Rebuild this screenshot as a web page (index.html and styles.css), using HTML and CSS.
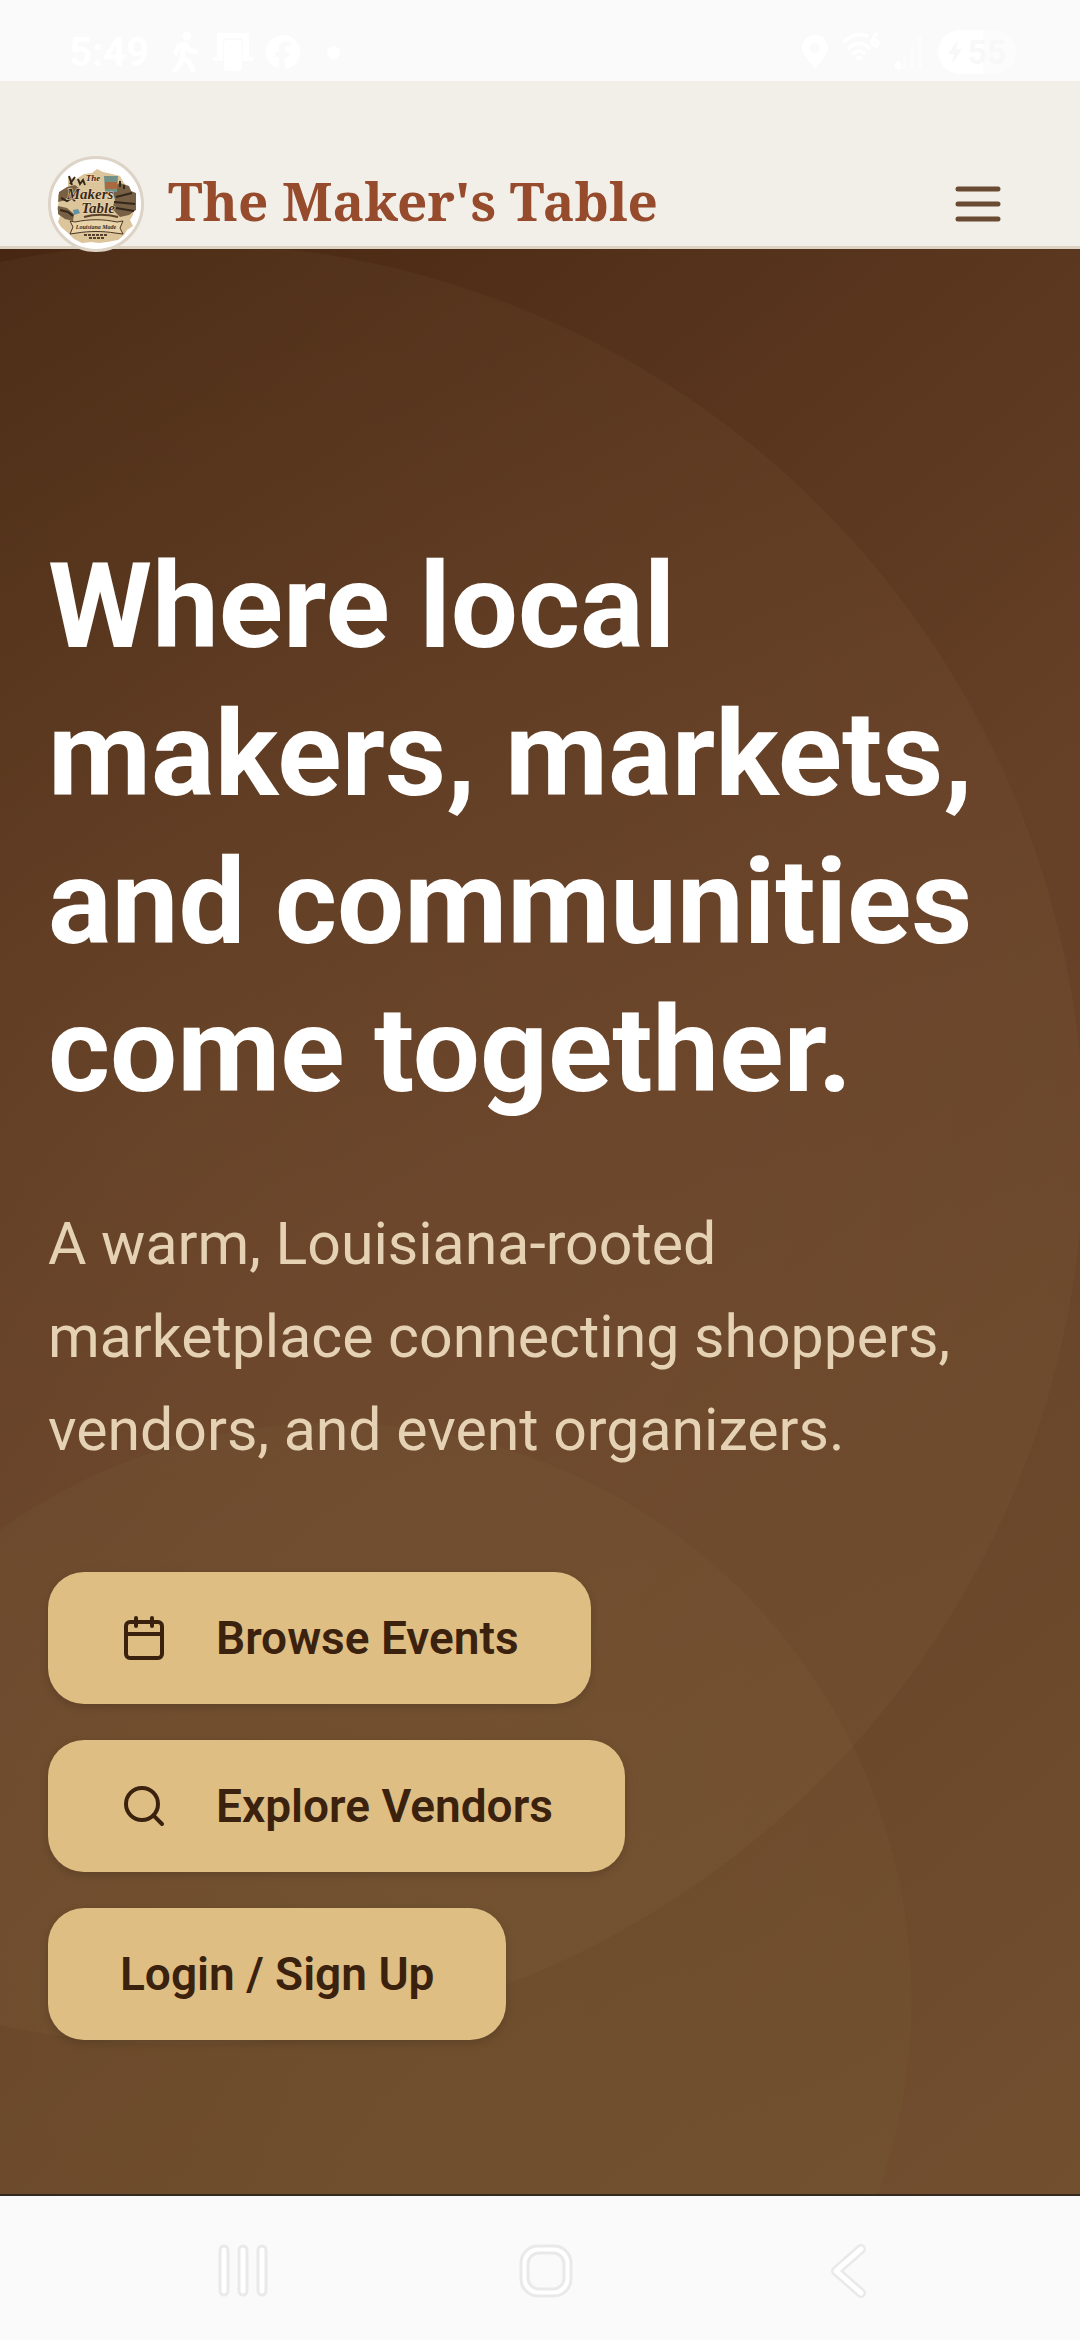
FILE: index.html
```
<!DOCTYPE html>
<html lang="en">
<head>
    <meta charset="UTF-8">
    <meta name="viewport" content="width=device-width, initial-scale=1.0">
    <title>The Maker's Table</title>
    <link rel="stylesheet" href="styles.css">
</head>
<body>

    <!-- Status bar -->
    <div class="status-bar">
        <div class="status-group">
            <span class="clock">5:49</span>
            <svg width="28" height="42" viewBox="0 0 28 42" fill="none" stroke="#fff" stroke-width="5" stroke-linecap="round" stroke-linejoin="round">
                <circle cx="15" cy="5" r="4.500" fill="#fff" stroke="none"/>
                <path d="M4 22l2-6 7-3 4 6 7 2M12 14l-2 12 8 6 3 7M10 27l-2 6-5 6"/>
            </svg>
            <svg width="40" height="38" viewBox="0 0 40 38" fill="#fff">
                <path d="M4 0h32v24h4v4H30V8a3 3 0 0 0-3-3H13a3 3 0 0 0-3 3v20H0v-4h4z"/>
                <rect x="11" y="7" width="18" height="31" rx="3"/>
            </svg>
            <svg width="34" height="34" viewBox="0 0 24 24" fill="#fff">
                <path d="M24 12a12 12 0 1 0-15 11.600v-8H6.500V12H9v-1.600c0-4 2-6 5.700-6 .8 0 2 .1 2.600.3v3.200h-1.500c-1.800 0-2.500.7-2.500 2.400V12h3.700l-.6 3.600h-3.100V24A12 12 0 0 0 24 12z"/>
            </svg>
            <span class="dot"></span>
        </div>
        <div class="status-group status-right">
            <svg width="26" height="34" viewBox="0 0 26 34" fill="#fff">
                <path fill-rule="evenodd" d="M13 0a13 13 0 0 1 13 13c0 9-8 12-13 21C8 25 0 22 0 13A13 13 0 0 1 13 0zm0 8a5 5 0 1 0 0 10 5 5 0 0 0 0-10z"/>
            </svg>
            <svg width="38" height="40" viewBox="0 0 38 40" fill="none" stroke="#fff" stroke-width="3.500" stroke-linecap="round">
                <path d="M2 10C9 2 18 1 25 4M7 16c6-6 14-6 20 0M12 21c3-3 7-3 10 0"/>
                <circle cx="17" cy="26" r="1"/>
                <path d="M34 2l-4 7"/>
                <circle cx="33" cy="11" r="3"/>
            </svg>
            <svg width="30" height="36" viewBox="0 0 30 36" fill="#fff">
                <path d="M1 30a3 3 0 0 1 6 0v5H1z"/>
                <path d="M9 22h4v13H9zM16 12h4v23h-4zM23 1h5v34h-5z" opacity=".4"/>
            </svg>
            <span class="battery">
                <svg width="16" height="24" viewBox="0 0 16 24" fill="#f8f8f8"><path d="M11 0L1 14h6l-2 10L15 9H9z"/></svg>55
            </span>
        </div>
    </div>

    <!-- Header -->
    <header class="header">
        <a class="brand" href="#">
            <svg class="logo" viewBox="0 0 96 96" role="img" aria-label="The Maker's Table">
                <circle cx="48" cy="48" r="46.500" fill="#fff" stroke="#ddd3c6" stroke-width="3"/>
                <path d="M20 21l8 2 8-5 8-1 5-4 6 3 9 2 8 2 4 7 7 7-1 6 5 9-2 10-3 5 3 6-6 4-3 5-6 5-11 2-8 1-8-1-9 1-8-4-6-6-7-6-3-5 2-6-3-7 2-8-1-6 5-5 5-2z" fill="#dcc49b"/>
                <path d="M11 36l8-5 8-2 5 4-5 7-9 4-8 2zM63 30l9-3 9 3 2 5 5 2v17l-7 5-9 2-8-8 3-9zM10 50l9 2 7 6-1 7-8-2-7-5z" fill="#786044"/>
                <path d="M21 20l3 9M27 21l-5 7M30 23l2 5 3-4 2 5M13 42l6 3 5-3 3 3M68 41l16-4M66 46l21 2M68 52l18 3M72 31v-6M76 29v4M12 54l8 2 5 4" fill="none" stroke="#34281b" stroke-width="2"/>
                <path d="M56 20h14l-1 16H57z" fill="#739187"/>
                <path d="M57 26h12v7H57z" fill="#aa6a40"/>
                <path d="M25 54l5-1 2 4-6 2z" fill="#5f95a6"/>
                <text x="45" y="25" class="logo-small">The</text>
                <text x="42" y="43" class="logo-script">Makers</text>
                <text x="50" y="57" class="logo-script">Table</text>
                <path d="M36 61c11-3 22-3 34 0" fill="none" stroke="#5a412a" stroke-width="2"/>
                <path d="M22 65l5 1c14-3 28-3 42 0l6-1-3 7 3 6-8-1c-12-2-26-2-38 0l-7 1 3-7z" fill="#e8d3aa" stroke="#4b3825"/>
                <text x="48" y="73" class="logo-ribbon">Louisiana Made</text>
                <path d="M36 79h24M41 82h15" stroke="#57422d" stroke-width="2" stroke-dasharray="3 1"/>
            </svg>
            <span class="brand-name">The Maker's Table</span>
        </a>
        <button class="menu-button" aria-label="Open menu">
            <svg width="60" height="60" viewBox="0 0 24 24" fill="none" stroke="currentColor" stroke-width="2" stroke-linecap="round">
                <path d="M4 6h16M4 12h16M4 18h16"/>
            </svg>
        </button>
    </header>

    <!-- Hero -->
    <main class="hero">
        <h1>Where local makers, markets, and communities come together.</h1>
        <p class="lead">A warm, Louisiana-rooted marketplace connecting shoppers, vendors, and event organizers.</p>
        <div class="actions">
            <a class="btn" href="#">
                <svg width="48" height="48" viewBox="0 0 24 24" fill="none" stroke="currentColor" stroke-width="2" stroke-linecap="round" stroke-linejoin="round">
                    <rect x="3" y="4" width="18" height="18" rx="2"/>
                    <path d="M8 2v4M16 2v4M3 10h18"/>
                </svg>
                Browse Events
            </a>
            <a class="btn" href="#">
                <svg width="48" height="48" viewBox="0 0 24 24" fill="none" stroke="currentColor" stroke-width="2" stroke-linecap="round">
                    <circle cx="11" cy="11" r="8"/>
                    <path d="M21 21l-4.300-4.300"/>
                </svg>
                Explore Vendors
            </a>
            <a class="btn" href="#">Login / Sign Up</a>
        </div>
    </main>

    <!-- Navigation bar -->
    <nav class="nav-bar">
        <button aria-label="Recent apps">
            <svg width="54" height="54" viewBox="0 0 54 54" fill="#fff" stroke="#e9e9e9" stroke-width="3">
                <rect x="4" y="2" width="8" height="49" rx="4"/>
                <rect x="23" y="2" width="8" height="49" rx="4"/>
                <rect x="42" y="2" width="8" height="49" rx="4"/>
            </svg>
        </button>
        <button aria-label="Home">
            <svg width="54" height="54" viewBox="0 0 54 54" fill="#fff" stroke="#e9e9e9" stroke-width="3">
                <rect x="2" y="2" width="50" height="50" rx="17"/>
                <rect x="9" y="9" width="36" height="36" rx="11" fill="#fafafa"/>
            </svg>
        </button>
        <button aria-label="Back">
            <svg width="54" height="54" viewBox="0 0 54 54" fill="none" stroke-linecap="round" stroke-linejoin="round">
                <path d="M40 5L15 27l25 22" stroke="#e9e9e9" stroke-width="10"/>
                <path d="M40 5L15 27l25 22" stroke="#fff" stroke-width="5"/>
            </svg>
        </button>
    </nav>

</body>
</html>
```
FILE: styles.css
```
/* Basic Reset */
* {
    margin: 0;
    padding: 0;
    box-sizing: border-box;
}

body {
    font-family: Roboto, sans-serif;
    min-height: 100vh;
    display: flex;
    flex-direction: column;
    background: #fafafa;
}

svg {
    display: block;
    flex-shrink: 0;
}

a {
    color: inherit;
    text-decoration: none;
}

button {
    border: none;
    background: none;
    cursor: pointer;
}

/* Status bar */
.status-bar {
    height: 81px;
    padding: 25px 64px 0 69px;
    display: flex;
    justify-content: space-between;
    color: #fff;
}

.status-group {
    height: 54px;
    display: flex;
    align-items: center;
    gap: 13px;
}

.status-right {
    gap: 14px;
}

.clock {
    font-size: 40px;
    font-weight: 700;
    margin-right: 10px;
}

.dot {
    width: 13px;
    height: 13px;
    margin-left: 14px;
    border-radius: 50%;
    background: #fff;
}

.battery {
    width: 78px;
    height: 44px;
    display: flex;
    align-items: center;
    justify-content: center;
    gap: 4px;
    border-radius: 22px;
    background: linear-gradient(to right, #fff 58%, #fcfcfc 58%);
    color: #f8f8f8;
    font-size: 34px;
    font-weight: 700;
}

/* Header */
.header {
    height: 168px;
    padding: 75px 48px 0;
    display: flex;
    align-items: flex-start;
    justify-content: space-between;
    background: #f2efe8;
    border-bottom: 3px solid #ddd1c2;
}

.brand {
    display: flex;
    align-items: center;
    gap: 24px;
    position: relative;
    z-index: 1;
}

.logo {
    width: 96px;
    height: 96px;
}

.logo text {
    fill: #3b2918;
    stroke: #f0dfbd;
    stroke-width: 1px;
    paint-order: stroke;
    text-anchor: middle;
    font-family: "Liberation Serif", serif;
    font-style: italic;
    font-weight: 700;
}

.logo .logo-small {
    font-size: 9px;
}

.logo .logo-script {
    font-size: 15px;
}

.logo .logo-ribbon {
    font-size: 6px;
    stroke: none;
}

.brand-name {
    padding-bottom: 6px;
    font-family: "Noto Serif", "Droid Serif", "Liberation Serif", serif;
    font-size: 53px;
    line-height: 72px;
    font-weight: 700;
    color: #964b2d;
}

.menu-button {
    padding: 18px 24px;
    color: #694a33;
}

/* Hero */
.hero {
    flex: 1;
    padding: 0 48px 154px;
    display: flex;
    flex-direction: column;
    justify-content: flex-end;
    background:
        radial-gradient(circle at 17% 46%, rgba(190, 155, 105, 0.11) 0, rgba(190, 160, 110, 0.05) 900px, transparent 901px),
        radial-gradient(circle at 31% 90%, rgba(130, 130, 60, 0.12) 0, rgba(135, 130, 75, 0.07) 576px, transparent 577px),
        linear-gradient(140deg, #472712 0%, #653f26 48%, #714f2f 100%);
    border-bottom: 2px solid #33291f;
}

h1 {
    font-size: 119px;
    line-height: 148px;
    font-weight: 700;
    color: #fff;
}

.lead {
    margin: 72px 0 96px;
    font-size: 59px;
    line-height: 93px;
    color: #e5d2b5;
}

.actions {
    display: flex;
    flex-direction: column;
    align-items: flex-start;
    gap: 36px;
}

.btn {
    height: 132px;
    padding: 0 72px;
    display: flex;
    align-items: center;
    gap: 48px;
    border-radius: 36px;
    background: #dfbe83;
    box-shadow: 0 3px 9px rgba(0, 0, 0, 0.15);
    font-size: 46px;
    font-weight: 600;
    color: #3a220e;
}

/* Navigation bar */
.nav-bar {
    height: 144px;
    padding: 6px 205px 0 216px;
    display: flex;
    align-items: center;
    justify-content: space-between;
}
```
